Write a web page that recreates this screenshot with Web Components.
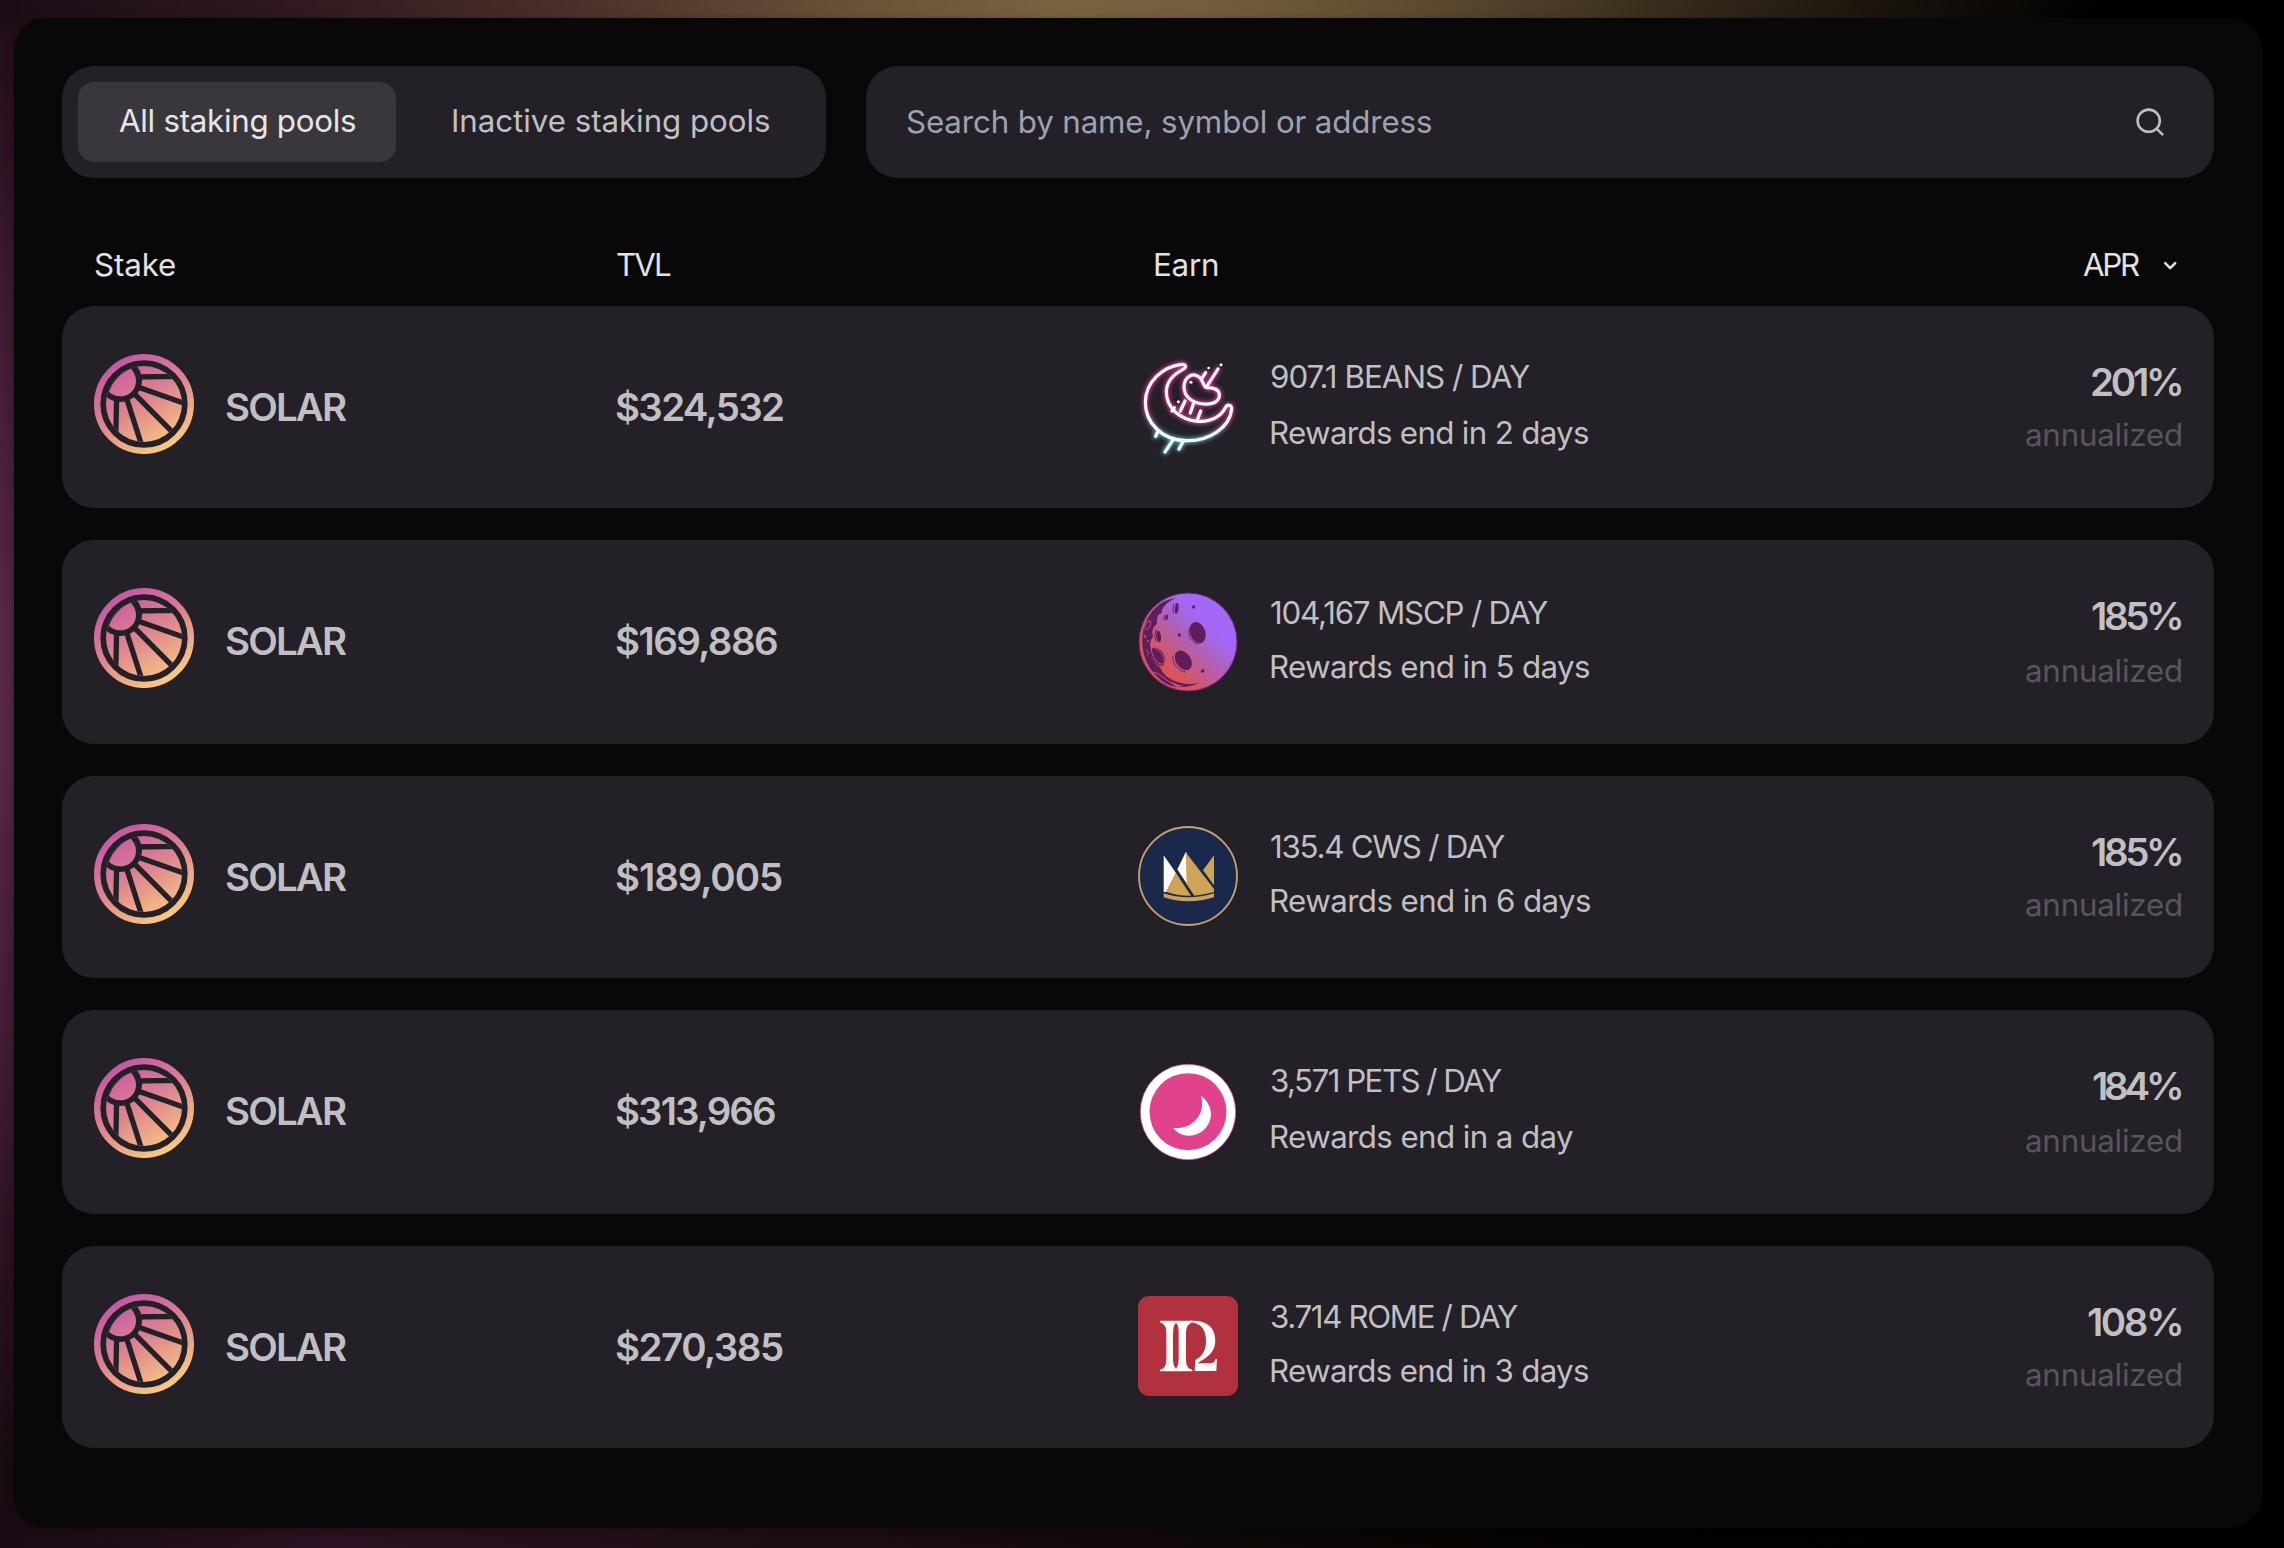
<!DOCTYPE html>
<html lang="en">
<head>
<meta charset="utf-8">
<title>Staking pools</title>
<style>
  html, body { margin: 0; height: 100%; background: #000; }
  body { font-family: Inter, "Liberation Sans", sans-serif; }
</style>
</head>
<body>
<staking-page>
  <staking-toolbar slot="toolbar"></staking-toolbar>
  <pool-header slot="header"></pool-header>
  <pool-row logo="beans" h="202" tvl="$324,532" tw="167" rate="907.1 BEANS / DAY" rw="259" end="Rewards end in 2 days" ew="317" apr="201%" aw="89" style="--icon:50px"></pool-row>
  <pool-row logo="moon" h="204" tvl="$169,886" tw="161" rate="104,167 MSCP / DAY" rw="277" end="Rewards end in 5 days" ew="318" apr="185%" aw="89" style="--icon:52px;--l1:2px;--ann:2px"></pool-row>
  <pool-row logo="crown" h="202" tvl="$189,005" tw="166" rate="135.4 CWS / DAY" rw="234" end="Rewards end in 6 days" ew="319" apr="185%" aw="89" style="--icon:50px;--l2:-2px"></pool-row>
  <pool-row logo="pets" h="204" tvl="$313,966" tw="159" rate="3,571 PETS / DAY" rw="231" end="Rewards end in a day" ew="302" apr="184%" aw="88" style="--icon:52px;--ann:2px"></pool-row>
  <pool-row logo="rome" h="202" tvl="$270,385" tw="167" rate="3.714 ROME / DAY" rw="247" end="Rewards end in 3 days" ew="317" apr="108%" aw="93" style="--icon:50px;--l2:-2px"></pool-row>
</staking-page>

<script>
const pen = document.createElement('canvas').getContext('2d');

/* A single line of text whose box hugs its ink and spans the width given in "w". */
class FitText extends HTMLElement {
  connectedCallback() {
    const root = this.attachShadow({ mode: 'open' });
    root.innerHTML = `<style>:host{display:block;white-space:nowrap}span{display:block}</style><span><slot></slot></span>`;
    const cs = getComputedStyle(this), text = this.textContent, w = +this.getAttribute('w');
    pen.font = `${cs.fontWeight} ${cs.fontSize} ${cs.fontFamily}`;
    const m = pen.measureText(text);
    const ink = m.actualBoundingBoxLeft + m.actualBoundingBoxRight;
    const span = root.querySelector('span');
    span.style.letterSpacing = ((w - ink) / (text.length - 1)).toFixed(3) + 'px';
    span.style.marginLeft = m.actualBoundingBoxLeft.toFixed(2) + 'px';
    this.style.width = w + 'px';
  }
}
customElements.define('fit-text', FitText);

class StakingPage extends HTMLElement {
  constructor() {
    super();
    this.attachShadow({ mode: 'open' }).innerHTML = `
      <style>
        :host { display: block; box-sizing: border-box; width: 2284px; height: 1548px; padding: 18px 22px 20px 14px;
          background:
            linear-gradient(90deg, #1a0c16 0, #30191f 290px, #4a3029 570px, #6a5238 860px, #79623f 1060px, #745d3c 1200px, #5d4b30 1420px, #352a1b 1680px, #15100a 1920px, #020101 2100px, #000 2284px) 0 0 / 100% 24px no-repeat,
            radial-gradient(ellipse 1250px 770px at -60px 690px, #5a2947 0%, #532645 12%, #3f1b34 48%, #2a1120 74%, #190b14 100%, transparent 100%),
            linear-gradient(90deg, #180b13 0, #2a1222 330px, #1a0c10 900px, #080503 1400px, #000 2000px); }
        main { box-sizing: border-box; height: 1510px; padding: 48px; border-radius: 32px; background: #080808; box-shadow: 0 2px 10px rgba(0,0,0,.3); }
        .rows { display: flex; flex-direction: column; gap: 32px; }
      </style>
      <main>
        <slot name="toolbar"></slot>
        <slot name="header"></slot>
        <div class="rows"><slot></slot></div>
      </main>`;
  }
}
customElements.define('staking-page', StakingPage);

class StakingToolbar extends HTMLElement {
  constructor() {
    super();
    this.attachShadow({ mode: 'open' }).innerHTML = `
      <style>
        :host { display: flex; gap: 40px; height: 112px; font-size: 31.3px; line-height: 79px; }
        .box { box-sizing: border-box; height: 112px; border-radius: 32px; background: #232027; padding: 16px; }
        .tabs { display: flex; gap: 16px; width: 764px; color: #c0bfc1; }
        .tab { box-sizing: border-box; height: 80px; border-radius: 16px; padding-left: 41px; }
        .on { width: 318px; background: #39373b; color: #e6e6e7; }
        .search { flex: 1; display: flex; align-items: center; justify-content: space-between; padding: 0 48px 0 41px; color: #9ca3af; }
        svg { display: block; }
      </style>
      <div class="box tabs">
        <div class="tab on"><fit-text w="236">All staking pools</fit-text></div>
        <div class="tab"><fit-text w="316">Inactive staking pools</fit-text></div>
      </div>
      <div class="box search">
        <fit-text w="524">Search by name, symbol or address</fit-text>
        <svg width="32" height="32" viewBox="0 0 32 32" fill="none" stroke="#bfbfc0" stroke-width="2.6" stroke-linecap="round"><circle cx="14.7" cy="14.7" r="11.1"/><path d="M22.8 22.8L28.4 28.4"/></svg>
      </div>`;
  }
}
customElements.define('staking-toolbar', StakingToolbar);

class PoolHeader extends HTMLElement {
  constructor() {
    super();
    this.attachShadow({ mode: 'open' }).innerHTML = `
      <style>
        :host { display: grid; grid-template-columns: 522px 538px 1fr auto; align-items: start; height: 128px; box-sizing: border-box; padding: 63px 36px 0 33px; font-size: 31.3px; line-height: 48px; color: #e2e2e2; }
        .apr { display: flex; align-items: center; gap: 22px; }
      </style>
      <fit-text w="80">Stake</fit-text>
      <fit-text w="54">TVL</fit-text>
      <fit-text w="63">Earn</fit-text>
      <div class="apr"><fit-text w="57">APR</fit-text>
        <svg width="16" height="16" viewBox="0 0 16 16" fill="none" stroke="#e2e2e2" stroke-width="2.5" stroke-linecap="round" stroke-linejoin="round"><path d="M3.2 6.2L8.2 11.2L13.2 6.2"/></svg>
      </div>`;
  }
}
customElements.define('pool-header', PoolHeader);

const LOGOS = {
  solar: ['42 42 300 300', `
    <defs>
      <linearGradient id="g" gradientUnits="userSpaceOnUse" x1="105" y1="60" x2="265" y2="325"><stop offset="0" stop-color="#c554a6"/><stop offset=".5" stop-color="#dd868f"/><stop offset="1" stop-color="#fbcb7e"/></linearGradient>
      <clipPath id="c"><circle cx="192" cy="192" r="114"/></clipPath>
    </defs>
    <circle cx="192" cy="192" r="140.500" fill="none" stroke="url(#g)" stroke-width="19"/>
    <g clip-path="url(#c)">
      <rect x="70" y="70" width="250" height="250" fill="url(#g)"/>
      <g stroke="#232027" stroke-width="16"><path d="M150 111L310 109M150 133L325 194M150 148L290 289M135 160L188 325M110 160L107 310"/></g>
      <circle cx="121" cy="121" r="65" fill="#232027"/>
    </g>
    <path d="M152 86C184 118 165 168 121 169C106 169 94 163 87 155C98 124 122 98 152 86Z" fill="url(#g)"/>`],
  beans: ['24 48 300 300', `
    <defs>
      <filter id="b" x="-20%" y="-20%" width="140%" height="140%"><feGaussianBlur stdDeviation="6"/></filter>
      <linearGradient id="n" gradientUnits="userSpaceOnUse" x1="150" y1="215" x2="140" y2="300"><stop offset="0" stop-color="#d8388a"/><stop offset="1" stop-color="#63b4c2"/></linearGradient>
      <linearGradient id="w" gradientUnits="userSpaceOnUse" x1="150" y1="90" x2="150" y2="310"><stop offset="0" stop-color="#fff3fa"/><stop offset=".6" stop-color="#fff"/><stop offset="1" stop-color="#e9fbfd"/></linearGradient>
      <g id="s" fill="none" stroke-linecap="round" stroke-linejoin="round">
        <path d="M154 73C100 80 47 123 46 187C46 250 98 301 168 302C238 304 300 262 305 207C305 193 292 192 286 203C273 230 242 246 205 244C151 240 108 204 109 154C110 121 132 102 159 88C172 81 166 71 154 73Z"/>
        <path d="M202 108C182 98 163 115 162 139C161 169 186 190 222 192C254 194 269 181 268 164C267 145 247 143 230 143C219 142 220 115 202 108Z"/>
        <path d="M230 140L264 87M216 114L227 98M165 183L151 213M133 203L126 213M190 192L181 219M212 213L203 237M84 273L77 289M130 298L105 336M159 305L147 327"/>
      </g>
    </defs>
    <use href="#s" stroke="url(#n)" stroke-width="15" filter="url(#b)"/>
    <use href="#s" stroke="url(#n)" stroke-width="12" opacity=".4"/>
    <use href="#s" stroke="url(#w)" stroke-width="9.500"/>
    <g fill="#fff"><circle cx="273" cy="74" r="4.500"/><circle cx="236" cy="84" r="4"/><circle cx="183" cy="127" r="4.500"/><circle cx="145" cy="185" r="4.500"/></g>`],
  moon: ['24 36 300 300', `
    <defs><linearGradient id="g" gradientUnits="userSpaceOnUse" x1="235" y1="130" x2="105" y2="270"><stop offset="0" stop-color="#a368f8"/><stop offset=".35" stop-color="#ad62c0"/><stop offset=".7" stop-color="#c65a80"/><stop offset="1" stop-color="#dd5355"/></linearGradient>
    <clipPath id="c"><circle cx="174" cy="186" r="146"/></clipPath></defs>
    <circle cx="174" cy="186" r="147" fill="url(#g)" stroke="#6b2a6d" stroke-width="3"/>
    <g fill="#5f1d5c" clip-path="url(#c)">
      <path d="M137 54C110 66 96 82 94 101C84 97 79 117 81 132C68 138 64 157 69 171C58 183 58 197 64 208C58 224 69 250 90 262C98 284 120 302 153 309C172 314 190 313 206 309C180 324 120 330 88 296C26 245 18 140 76 84C92 66 115 57 137 54Z"/>
      <ellipse cx="203" cy="158" rx="23" ry="33" transform="rotate(-20 203 158)"/>
      <ellipse cx="160" cy="241" rx="22" ry="32" transform="rotate(-34 160 241)"/>
      <ellipse cx="140" cy="85" rx="5.500" ry="16" transform="rotate(5 140 85)"/>
      <ellipse cx="86" cy="169" rx="7" ry="18" transform="rotate(-8 86 169)"/>
      <ellipse cx="110" cy="112" rx="4" ry="9" transform="rotate(12 110 112)"/>
      <ellipse cx="84" cy="230" rx="18" ry="30" transform="rotate(-32 84 230)"/>
      <circle cx="191" cy="81" r="5"/><circle cx="148" cy="165" r="5"/><circle cx="218" cy="273" r="5.500"/>
    </g>
    <g fill="none" stroke="#5f1d5c" stroke-width="2.500"><path d="M179 143C170 165 184 189 205 192M130 226C122 245 145 276 168 276M132 70Q126 86 131 101M78 148Q70 168 79 186M104 105Q100 114 103 121"/></g>
    <g fill="none" stroke="#d0596b" stroke-width="3"><path d="M63 204C75 194 103 225 104 246C98 262 68 248 63 204M44 145C46 128 55 120 62 124C63 138 54 152 46 149M47 211C55 210 58 218 53 225M70 276C86 280 105 296 121 308"/></g>
    <g fill="#d0596b"><circle cx="53" cy="183" r="3"/><path d="M40 170L48 163L47 174ZM115 303L150 316L165 318L140 320Z"/></g>`],
  crown: ['24 33 300 300', `
    <circle cx="174" cy="183" r="147" fill="#1a284b" stroke="#c4a26c" stroke-width="5.500"/>
    <path d="M101 121L138 174L109 231H101Z" fill="#fdf8f3"/>
    <path d="M138 174L183 242Q142 243 109 231Z" fill="#d1a355"/>
    <path d="M167 112L171 113V208L142 163Z" fill="#fdf8f3"/>
    <path d="M167 112L252 222V231Q222 240 193 242L170 208Z" fill="#d1a355"/>
    <path d="M252 121V211L219 166Z" fill="#d1a355"/>
    <path d="M101 235Q174 259 252 235V247Q174 271 101 247Z" fill="#d09f5f"/>`],
  pets: ['24 36 300 300', `
    <circle cx="174" cy="186" r="143" fill="#fff" stroke="#e0428b" stroke-width="2"/>
    <circle cx="174" cy="185" r="115.500" fill="#e0428b"/>
    <path d="M213 137C234 153 244 174 243 197C239 232 209 257 178 257C158 257 142 250 130 234C168 236 193 220 207 197C219 177 218 155 213 137Z" fill="#fff"/>`],
  rome: ['24 33 300 300', `
    <rect x="24" y="33" width="300" height="300" rx="34" fill="#b1313f"/>
    <g fill="#fffaf8">
      <path d="M90 107H187V112Q169 119 168 140V225Q168 251 187 254V259H90V254Q108 252 109 225V140Q108 117 90 112Z"/>
      <path d="M176 107H194C235 108 257 132 256 169C255 199 236 215 211 229L203 235H238Q254 235 257 222H261L259 258H194L196 225C216 215 228 197 228 168C228 136 215 117 190 113Z"/>
    </g>
    <path d="M138 114Q147 119 146 150V218Q145 246 138 250Q129 246 129 218V150Q129 119 138 114Z" fill="#b1313f"/>`]
};

class TokenLogo extends HTMLElement {
  connectedCallback() {
    const [box, art] = LOGOS[this.getAttribute('name')];
    this.attachShadow({ mode: 'open' }).innerHTML = `
      <style>:host{display:block;width:100px;height:100px}svg{display:block;overflow:visible}</style>
      <svg width="100" height="100" viewBox="${box}">${art}</svg>`;
  }
}
customElements.define('token-logo', TokenLogo);

class PoolRow extends HTMLElement {
  connectedCallback() {
    const a = n => this.getAttribute(n);
    this.attachShadow({ mode: 'open' }).innerHTML = `
      <style>
        :host { display: grid; grid-template-columns: 522px 522px 1fr auto; box-sizing: border-box; height: ${a('h')}px; padding: 0 33px 0 32px; border-radius: 32px; background: #232027; color: #c0bfc1; font-size: 31.3px; line-height: 48px; }
        .stake { display: flex; gap: 32px; padding-top: 48px; }
        .big { font-size: 38.5px; font-weight: 600; line-height: 56px; }
        .stake .big { margin-top: 25px; }
        .tvl { margin-top: 73px; }
        .earn { display: flex; gap: 33px; }
        .earn token-logo { margin-top: var(--icon); }
        .rate { margin-top: calc(47px + var(--l1, 0px)); }
        .end { margin-top: calc(8px - var(--l1, 0px) + var(--l2, 0px)); }
        .apr { display: flex; flex-direction: column; align-items: flex-end; padding-top: 48px; }
        .ann { color: #575659; margin-top: calc(1px + var(--ann, 0px)); }
      </style>
      <div class="stake"><token-logo name="solar"></token-logo><fit-text class="big" w="121">SOLAR</fit-text></div>
      <div class="tvl big"><fit-text w="${a('tw')}">${a('tvl')}</fit-text></div>
      <div class="earn"><token-logo name="${a('logo')}"></token-logo>
        <div><fit-text class="rate" w="${a('rw')}">${a('rate')}</fit-text><fit-text class="end" w="${a('ew')}">${a('end')}</fit-text></div>
      </div>
      <div class="apr"><fit-text class="big" w="${a('aw')}">${a('apr')}</fit-text><fit-text class="ann" w="155">annualized</fit-text></div>`;
  }
}
customElements.define('pool-row', PoolRow);
</script>
</body>
</html>
